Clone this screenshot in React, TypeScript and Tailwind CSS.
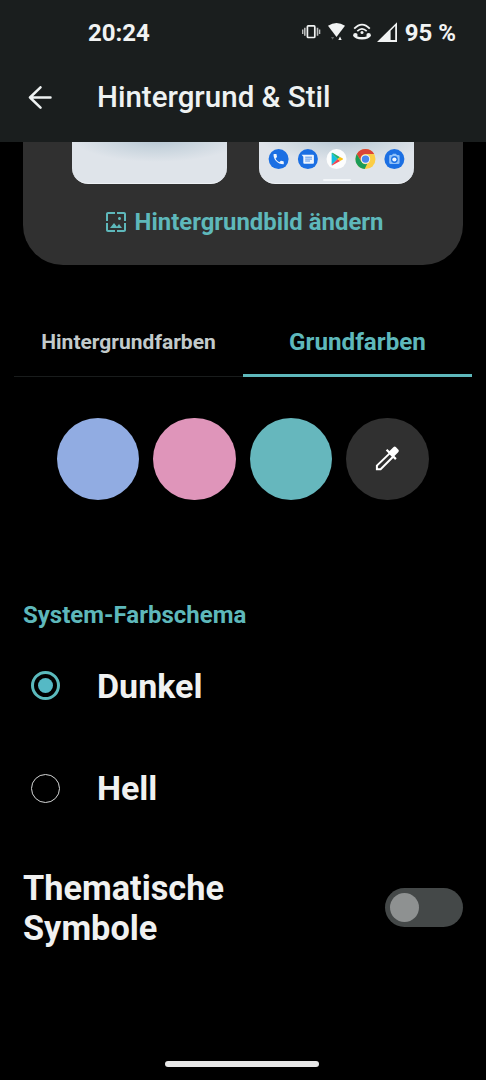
import {useState} from 'react';

const swatches = [
  {name: 'Blau', color: 'bg-[#91ace2]'},
  {name: 'Rosa', color: 'bg-[#df95ba]'},
  {name: 'Türkis', color: 'bg-[#66b7bd]'},
];

const schemes = ['Dunkel', 'Hell'];

const StatusIcons = () => (
  <svg width="96" height="24" viewBox="301 20.5 96 24" fill="#f1f3f3" className="shrink-0">
    {/* vibrate */}
    <rect x="307.4" y="25.4" width="7.4" height="11.6" rx="0.8" fill="none" stroke="#f1f3f3" strokeWidth="1.7" />
    <path d="M304 27.2h1.6v8H304zM302 29h1.4v4.4H302zM316.7 27.2h1.6v8h-1.6zM318.9 29h1.4v4.4h-1.4z" opacity="0.75" />
    {/* wifi */}
    <path d="M328 25.2q8.5-5.2 17 0l-8.5 11.2z" />
    <path d="M338.3 39.4l1.7-3.4 1.7 3.4z" />
    <path d="M331 36.6h3.2l-1.6 2.6z" opacity="0.35" />
    {/* hotspot */}
    <g fill="none" stroke="#f1f3f3">
      <path d="M354.2 28.2q7.8-8.2 15.6 0" strokeWidth="1.8" />
      <path d="M357.3 30.6q4.7-4.6 9.4 0" strokeWidth="1.6" />
      <path d="M354.2 34.2q1.6 3.6 7.8 3.6t7.8-3.6" strokeWidth="2.4" />
    </g>
    <circle cx="362" cy="32" r="1.5" />
    <circle cx="355.4" cy="34.6" r="2.2" />
    <circle cx="368.6" cy="34.6" r="2.2" />
    {/* signal */}
    <path fillRule="evenodd" d="M377 41.6L397 21.8v19.8zM390.6 30.2v9.4h4.6V25.6z" />
  </svg>
);

const BackIcon = () => (
  <svg width="24" height="24" viewBox="0 0 24 24" fill="none" stroke="#eef2f2" strokeWidth="2.5" strokeLinecap="round" strokeLinejoin="round">
    <path d="M22.5 11.5H2M12.5 1.3L2 11.5 12.5 21.7" />
  </svg>
);

const WallpaperIcon = () => (
  <svg width="24" height="24" viewBox="0 0 24 24" fill="currentColor" className="mb-0.5">
    <path d="M4 4h7V2H4c-1.1 0-2 .9-2 2v7h2V4zm6 9l-4 5h12l-3-4-2.03 2.71L10 13zm7-4.5c0-.83-.67-1.5-1.5-1.5S14 7.67 14 8.5s.67 1.5 1.5 1.5S17 9.33 17 8.5zM20 2h-7v2h7v7h2V4c0-1.1-.9-2-2-2zm0 18h-7v2h7c1.1 0 2-.9 2-2v-7h-2v7zM4 13H2v7c0 1.1.9 2 2 2h7v-2H4v-7z" />
  </svg>
);

const PickerIcon = () => (
  <svg width="25" height="25" viewBox="0 0 25 25" fill="none" stroke="#fff">
    <path d="M14.4 7.6L1.9 19.6v3.6h3.7L17.8 11" strokeWidth="2" />
    <path d="M11.6 3.8l9.3 9.3" strokeWidth="2.2" />
    <path d="M13 6.6l5.6-5.5q1.1-1 2.2 0l2.6 2.6q1 1.1 0 2.2L18 11.4z" fill="#fff" stroke="none" />
  </svg>
);

const DockIcons = () => (
  <svg width="140" height="22" viewBox="0.4 -0.1 140 22">
    <g fill="#1b6fe3">
      <circle cx="12" cy="11" r="10" />
      <circle cx="41.3" cy="11" r="10" />
      <circle cx="127.8" cy="11" r="10" />
    </g>
    {/* phone */}
    <g transform="translate(5.2 4.2) scale(0.57)">
      <path fill="#edf4fd" d="M6.62 10.79c1.44 2.83 3.76 5.14 6.59 6.59l2.2-2.2c.27-.27.67-.36 1.02-.24 1.12.37 2.33.57 3.57.57.55 0 1 .45 1 1V20c0 .55-.45 1-1 1-9.39 0-17-7.61-17-17 0-.55.45-1 1-1h3.5c.55 0 1 .45 1 1 0 1.25.2 2.45.57 3.57.11.35.03.74-.25 1.02l-2.2 2.2z" />
    </g>
    {/* messages */}
    <path fill="#edf4fd" d="M35 6.6h11.4q.9 0 .9.9v7.2q0 .9-.9.9h-8.8q-.9 0-.9-.9V8.6z" />
    <path stroke="#4a8ae6" strokeWidth="0.9" d="M38.6 9.1h6.8M38.6 11h6.8M38.6 12.9h4.8" />
    {/* play store */}
    <circle cx="69.9" cy="11" r="10" fill="#fcfdfd" />
    <path fill="#13bfe0" d="M65 5v12l6-6z" />
    <path fill="#22b573" d="M65 5q.5-.6 1.4 0l7.2 4.1L71 11z" />
    <path fill="#ee4250" d="M65 17q.5.6 1.4 0l7.2-4.1L71 11z" />
    <path fill="#fbc116" d="M73.4 9l2.8 1.5q.7.5 0 1L73.4 13 71 11z" />
    {/* chrome */}
    <circle cx="98.9" cy="11" r="10" fill="#fbcd45" />
    <path fill="#db4437" d="M90.2 6A10 10 0 0 1 107.6 6H98.9a5 5 0 0 0-4.3 7.5z" />
    <path fill="#1b9c58" d="M90.2 6l4.4 7.5a5 5 0 0 0 6 2.2L98.1 21A10 10 0 0 1 90.2 6z" />
    <circle cx="98.9" cy="11" r="4.7" fill="#eef2f8" />
    <circle cx="98.9" cy="11" r="3.7" fill="#4a87ee" />
    {/* camera */}
    <path fill="#8fc0f8" d="M123.7 7h1.7l1-1.3h2.9l1 1.3h1.6q1.1 0 1.1 1.1v6.6q0 1.1-1.1 1.1h-8.2q-1.1 0-1.1-1.1V8.1q0-1.1 1.1-1.1z" />
    <circle cx="127.8" cy="11.4" r="3.4" fill="#1b6fe3" />
    <circle cx="127.8" cy="11.4" r="2.1" fill="#f2f7fe" />
  </svg>
);

const App = () => {
  const [scheme, setScheme] = useState('Dunkel');
  const [themed, setThemed] = useState(false);

  const displaySwatches = swatches.map(({name, color}) => (
    <button key={name} aria-label={name} className={`size-[82.5px] rounded-full ${color}`} />
  ));

  const displaySchemes = schemes.map((name) => (
    <button key={name} onClick={() => setScheme(name)} className="flex h-[102.5px] items-center text-left">
      <span
        className={`flex size-[29px] items-center justify-center rounded-full ${
          scheme === name ? 'border-3 border-[#5bbabd]' : 'border-[1.5px] border-[#d4d6d6]'
        }`}
      >
        {scheme === name && <span className="size-[15px] rounded-full bg-[#55b9c5]" />}
      </span>
      <span className="ml-[37px] text-[34px] leading-10 font-bold text-[#f0f1f1]">{name}</span>
    </button>
  ));

  return (
    <div className="flex h-[1080px] w-[486px] flex-col overflow-hidden bg-black font-[Roboto,sans-serif]">
      <header className="h-[142px] shrink-0 bg-[#1a1e1e]">
        <div className="flex h-[66px] items-center pr-[30px] pl-[88px] text-2xl font-bold text-[#f1f3f3]">
          <span>20:24</span>
          <div className="ml-auto flex items-center gap-2">
            <StatusIcons />
            <span className="whitespace-nowrap">95 %</span>
          </div>
        </div>
        <div className="flex h-[63px] items-center gap-[45px] pl-7">
          <BackIcon />
          <h1 className="text-[29.5px] font-medium text-[#eef2f2]">Hintergrund &amp; Stil</h1>
        </div>
      </header>

      <section className="mx-[23px] h-[123px] shrink-0 rounded-b-[40px] bg-[#303030]">
        <div className="flex gap-8 pl-[49px]">
          <div className="h-[42px] w-[155px] rounded-b-2xl border-b border-[#edf1f5] bg-[radial-gradient(85px_24px_at_55%_-10%,#b3c4d1_0%,#c8d4dd_45%,#dfe4ea_100%)]" />
          <div className="flex h-[42px] w-[155px] flex-col items-center justify-between rounded-b-2xl border-b border-[#edf1f5] bg-[radial-gradient(85px_24px_at_55%_-10%,#b3c4d1_0%,#c8d4dd_45%,#dfe4ea_100%)] pt-1.5">
            <DockIcons />
            <div className="mb-0.5 h-0.5 w-7 rounded-full bg-[#f3f6f9]" />
          </div>
        </div>
        <button className="mt-[21px] flex w-full items-center justify-center gap-[7px] pl-px text-[23.9px] font-bold text-[#5eb8bb]">
          <WallpaperIcon />
          Hintergrundbild ändern
        </button>
      </section>

      <nav className="mx-3.5 mt-[43px] flex h-[69px] shrink-0">
        <button className="flex-1 border-b border-[#191c1c] pt-0.5 text-[21px] font-bold text-[#c2cacb]">Hintergrundfarben</button>
        <button className="flex-1 border-b-3 border-[#5eb8bb] pt-0.5 text-[24.2px] font-bold text-[#5eb8bb]">Grundfarben</button>
      </nav>

      <div className="mt-[40.5px] flex shrink-0 gap-3.5 pl-[56.7px]">
        {displaySwatches}
        <button aria-label="Eigene Farbe" className="flex size-[82.5px] items-center justify-center rounded-full bg-[#303030]">
          <PickerIcon />
        </button>
      </div>

      <h2 className="mt-[99px] pl-[23px] text-2xl font-bold text-[#5eb8bb]">System-Farbschema</h2>
      <div className="mt-[3.5px] flex shrink-0 flex-col pl-[31px]">{displaySchemes}</div>

      <div className="mt-7 flex items-center justify-between px-[23px]">
        <p className="w-60 text-[34.3px] leading-10 font-bold text-[#f0f1f1]">Thematische Symbole</p>
        <button
          role="switch"
          aria-checked={themed}
          aria-label="Thematische Symbole"
          onClick={() => setThemed(!themed)}
          className={`flex h-[39px] w-[78px] items-center rounded-full bg-[#444848] px-[5px] ${themed ? 'justify-end' : ''}`}
        >
          <span className="size-[29px] rounded-full bg-[#8e9191]" />
        </button>
      </div>

      <div className="mt-auto mr-0.5 mb-[13px] h-1.5 w-[154px] shrink-0 self-center rounded-full bg-[#e8e8e8]" />
    </div>
  );
};

export default App;
